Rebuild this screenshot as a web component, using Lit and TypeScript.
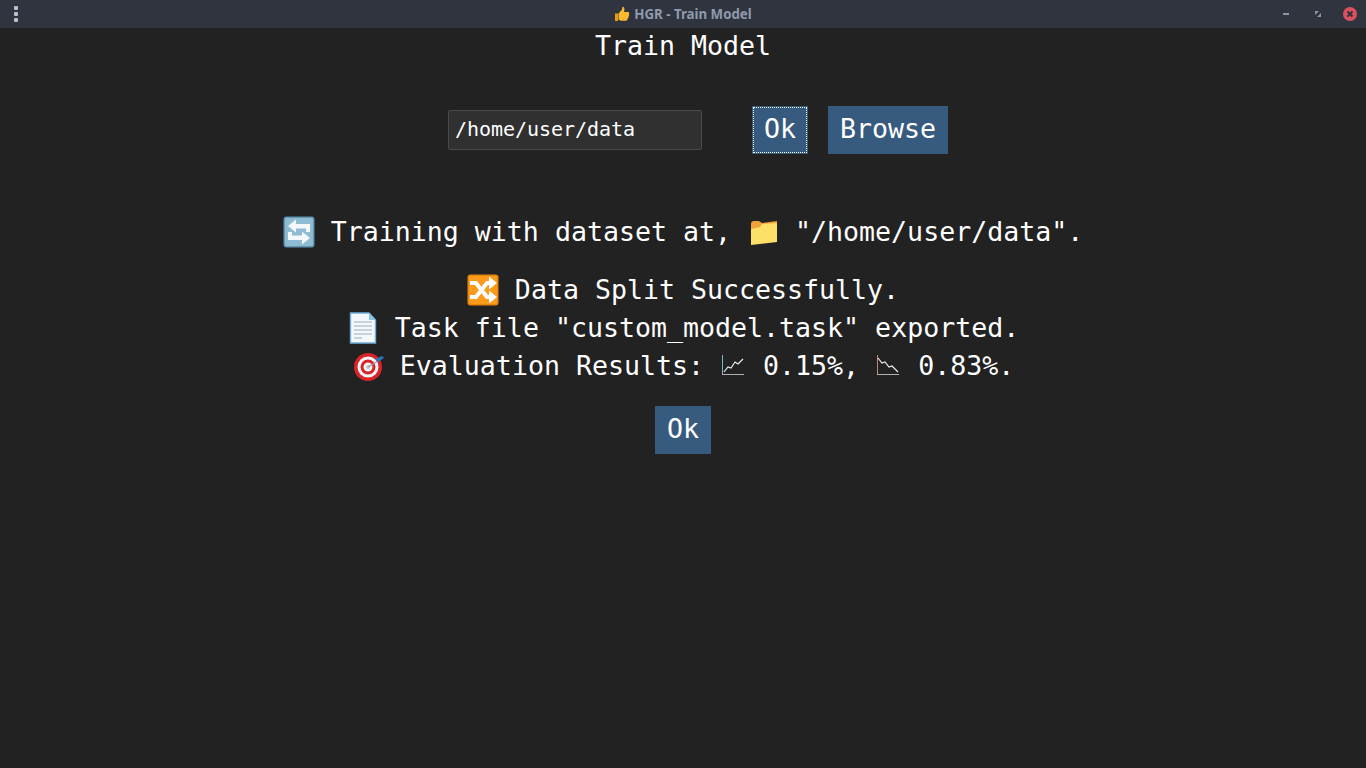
import { LitElement, html, css, svg } from "lit";
import { customElement } from "lit/decorators.js";

const sync = svg`<svg class="emoji" viewBox="0 0 32 32"><rect x="0.5" y="0.5" width="31" height="31" rx="3" fill="#5f96b4"/><rect x="2" y="2" width="28" height="28" rx="2" fill="#8fbcd2"/><path d="M13 3.5 L5 10 L13 16.5 V12.5 H23 V16 H27 V8 H13 Z" fill="#f3f8fa"/><path d="M19 28.5 L27 22 L19 15.5 V19.5 H9 V16 H5 V24 H19 Z" fill="#f3f8fa"/></svg>`;
const shuffle = svg`<svg class="emoji" viewBox="0 0 32 32"><rect x="0.5" y="0.5" width="31" height="31" rx="3" fill="#e8860c"/><rect x="2" y="2" width="28" height="28" rx="2" fill="#fb9a1b"/><path d="M3 9 H9 L20 23 H24" fill="none" stroke="#fff" stroke-width="4"/><path d="M3 23 H9 L20 9 H24" fill="none" stroke="#fff" stroke-width="4"/><path d="M22 2.5 L30 9 L22 15.5 Z M22 16.5 L30 23 L22 29.5 Z" fill="#fff"/></svg>`;
const doc = svg`<svg class="emoji" viewBox="0 0 32 32"><path d="M3.5 1 H22 L28.5 8 V31 H3.5 Z" fill="#f4f8fb" stroke="#6fb0dc" stroke-width="1.4"/><path d="M22 1 V8 H28.5 Z" fill="#8cc4e8"/><path d="M7 10 H25 M7 14 H25 M7 18 H25 M7 22 H25 M7 26 H15" stroke="#b8c6d2" stroke-width="1.4"/></svg>`;
const target = svg`<svg class="emoji" viewBox="0 0 32 32"><circle cx="16" cy="17" r="14" fill="#d8232a"/><circle cx="16" cy="17" r="10.5" fill="#f4f4f4"/><circle cx="16" cy="17" r="7.5" fill="#d8232a"/><circle cx="16" cy="17" r="4.5" fill="#f4f4f4"/><circle cx="16" cy="17" r="2" fill="#c9c9c9"/><path d="M16 17 L26 11" stroke="#9aa3aa" stroke-width="1.4"/><path d="M23 9 L30 6 L32 8 L26 12 Z" fill="#2a75b5"/></svg>`;
const folder = svg`<svg class="emoji" viewBox="0 0 32 32"><path d="M4 8 Q4 5 7 5 H12 L15 7 L30 5 V24 L4 28 Z" fill="#f2a23c"/><path d="M4 29 V13 L13 11 L15 8 L30 7 V26 Z" fill="#fde067"/></svg>`;
const up = svg`<svg class="chart" viewBox="0 0 24 20"><path d="M1.5 0 V19" stroke="#74b9cc" stroke-width="1"/><path d="M1 19.5 H23" stroke="#b0b0b0" stroke-width="1"/><path d="M3 17 L7 12 L10 13 L14 7 L17 9 L22 4" fill="none" stroke="#f2f2f2" stroke-width="1.1"/></svg>`;
const down = svg`<svg class="chart" viewBox="0 0 24 20"><path d="M1.5 0 V19" stroke="#c08a70" stroke-width="1"/><path d="M1 19.5 H23" stroke="#b0b0b0" stroke-width="1"/><path d="M2 3 L6 8 L9 7 L13 12 L16 11 L22 17" fill="none" stroke="#f2f2f2" stroke-width="1.1"/></svg>`;
const thumb = svg`<svg class="thumb" viewBox="0 0 16 16"><path d="M1 7.5 H4 V15 H1 Z" fill="#e89a1c"/><path d="M4.5 7.5 L8 3.5 L8.5 0.8 Q10.5 0.6 10.5 3 L10 6 H14.5 Q15.6 6.5 15 8 Q15.6 9.5 14.6 10.2 Q15 11.8 13.8 12.3 Q13.8 14.5 12 14.8 H7 L4.5 13.5 Z" fill="#fbb92e"/></svg>`;

@customElement("app-root")
export class AppRoot extends LitElement {
  static styles = css`
    :host {
      display: flex;
      flex-direction: column;
      width: 1366px;
      height: 768px;
      overflow: hidden;
      background: #222222;
      color: #ffffff;
      font-family: "DejaVu Sans Mono", monospace;
    }
    .bar {
      flex: none;
      height: 28px;
      box-sizing: border-box;
      background: #2f343f;
      display: grid;
      grid-template-columns: 1fr auto 1fr;
      align-items: center;
      font-family: "Noto Sans", sans-serif;
      font-weight: 700;
      font-size: 13.3px;
      color: #8f9aac;
    }
    .menu {
      display: flex;
      flex-direction: column;
      gap: 2px;
      padding-left: 14px;
    }
    .menu i {
      width: 4px;
      height: 4px;
      border-radius: 1px;
      background: #b6bfcc;
    }
    .caption {
      display: flex;
      align-items: center;
      gap: 4px;
    }
    .thumb { width: 16px; height: 16px; }
    .controls {
      display: flex;
      justify-content: flex-end;
      align-items: center;
    }
    .min { width: 6px; height: 2px; background: #8d96a6; margin-right: 26px; }
    .max { width: 6px; height: 6px; margin-right: 22px; display: block; }
    .close { width: 14px; height: 14px; margin-right: 9px; display: block; }
    .page {
      flex: 1;
      display: flex;
      flex-direction: column;
      align-items: center;
    }
    h1 {
      margin: 0;
      height: 36px;
      font-size: 26.6px;
      font-weight: 400;
      line-height: 36px;
    }
    .form {
      margin-top: 42px;
      padding-left: 30px;
      display: flex;
      align-items: center;
    }
    .input {
      box-sizing: border-box;
      width: 254px;
      height: 40px;
      padding: 0 6px;
      background: #303030;
      border: 1px solid #4a4a4a;
      border-radius: 2px;
      color: #fff;
      font: 20px/36px "DejaVu Sans Mono", monospace;
      letter-spacing: -0.04px;
    }
    .btn {
      box-sizing: border-box;
      height: 48px;
      display: flex;
      align-items: center;
      justify-content: center;
      padding-bottom: 2px;
      background: #375a7f;
      font-size: 26.6px;
      line-height: 1;
    }
    .ok1 {
      margin-left: 50px;
      width: 56px;
      position: relative;
    }
    .ok1::after {
      content: "";
      position: absolute;
      inset: 1px;
      border: 1px dotted #ffffff;
    }
    .browse { margin-left: 20px; width: 120px; }
    .msg {
      font-size: 26.6px;
      height: 38px;
      line-height: 38px;
      display: flex;
      align-items: center;
      white-space: pre;
    }
    .first { margin-top: 59px; margin-bottom: 20px; }
    .emoji { width: 32px; height: 32px; display: block; flex: none; }
    .chart { width: 24px; height: 20px; display: block; flex: none; margin: 0 2px 2px 1px; }
    .ok2 { margin-top: 21px; width: 56px; }
  `;

  render() {
    return html`
      <div class="bar">
        <div class="menu"><i></i><i></i><i></i></div>
        <div class="caption">${thumb}<span>HGR - Train Model</span></div>
        <div class="controls">
          <div class="min"></div>
          <svg class="max" viewBox="0 0 6 6"><path d="M0 0 H4 L0 4 Z M6 6 H2 L6 2 Z" fill="#8d96a6"/></svg>
          <svg class="close" viewBox="0 0 14 14"><circle cx="7" cy="7" r="7" fill="#d9515f"/><path d="M4.5 4.5 L9.5 9.5 M9.5 4.5 L4.5 9.5" stroke="#2f343f" stroke-width="2"/></svg>
        </div>
      </div>
      <div class="page">
        <h1>Train Model</h1>
        <div class="form">
          <div class="input">/home/user/data</div>
          <div class="btn ok1">Ok</div>
          <div class="btn browse">Browse</div>
        </div>
        <div class="msg first">${sync}<span> Training with dataset at, </span>${folder}<span> "/home/user/data".</span></div>
        <div class="msg">${shuffle}<span> Data Split Successfully.</span></div>
        <div class="msg">${doc}<span> Task file "custom_model.task" exported.</span></div>
        <div class="msg">${target}<span> Evaluation Results: </span>${up}<span> 0.15%, </span>${down}<span> 0.83%.</span></div>
        <div class="btn ok2">Ok</div>
      </div>
    `;
  }
}
